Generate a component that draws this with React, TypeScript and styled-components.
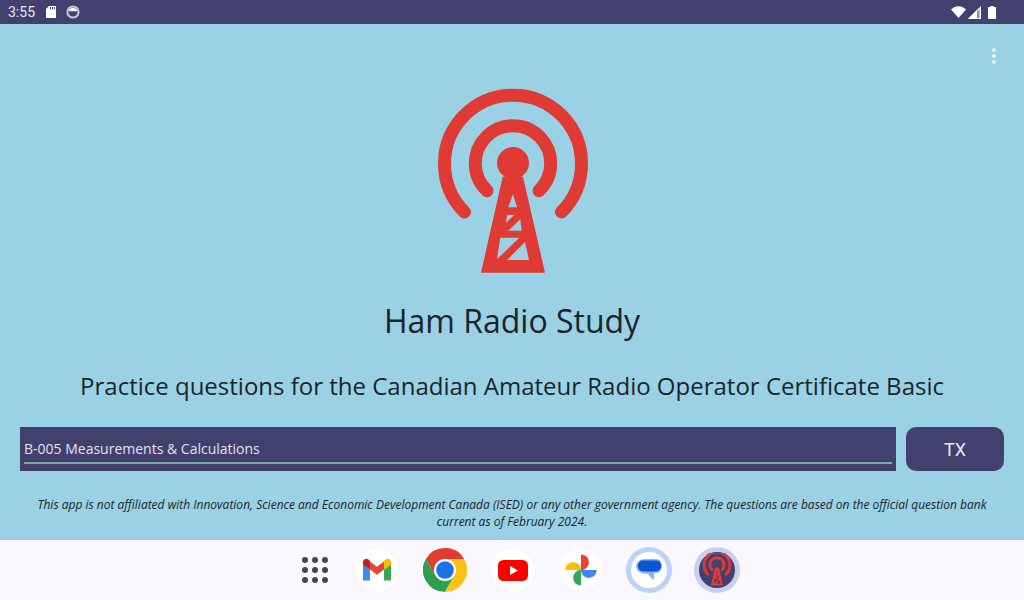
import React from 'react'
import styled, { createGlobalStyle } from 'styled-components'

const indigo = '#41406f'
const sky = '#9ad1e5'
const red = '#e03a35'

const GlobalStyle = createGlobalStyle`
  html, body {
    margin: 0;
    padding: 0;
    width: 1024px;
    height: 600px;
    overflow: hidden;
    background: ${sky};
    font-family: 'Open Sans', 'Liberation Sans', sans-serif;
  }
  * { box-sizing: border-box; }
`

const towerPath =
  'M81.7 96.7L60 192.7H124L102 96.7Z M92 114L87.3 127.3H96Z M86 135H93.3L85 142.7Z M99.3 139.3L100.7 150.7H87.3Z M79.3 157.7H98.3L76 179.3Z M104 162L108 180H86Z'

const StatusIcons = {
  Sd: () => (
    <svg width="12" height="14" viewBox="0 0 12 14">
      <path d="M4 1H11V13H1V4Z" fill="#fff" />
      <path d="M5.5 2v2.4M7.5 2v2.4M9.5 2v2.4" stroke="#41406f" strokeWidth="1" />
    </svg>
  ),
  Sync: () => (
    <svg width="14" height="14" viewBox="0 0 14 14">
      <circle cx="7" cy="7" r="5.6" fill="none" stroke="#c9c8d6" strokeWidth="2" />
      <path d="M2.6 6.2A4.5 4.5 0 0 1 11.4 6.2Z" fill="#fff" />
    </svg>
  ),
  Wifi: () => (
    <svg width="15" height="12" viewBox="0 0 15 12">
      <path d="M0 3.6C4.2 -0.9 10.8 -0.9 15 3.6L7.5 12Z" fill="#fff" />
    </svg>
  ),
  Signal: () => (
    <svg width="13" height="13" viewBox="0 0 13 13">
      <path d="M13 0V13H0Z" fill="#8f8eac" />
      <path d="M9 4V13H0Z" fill="#fff" />
      <path d="M13 0V13H11.6V3.4Z" fill="#fff" />
      <path d="M0 13L13 0V1.6L2.4 12H13V13Z" fill="#fff" />
    </svg>
  ),
  Battery: () => (
    <svg width="8" height="13" viewBox="0 0 8 13">
      <path d="M2.5 0H5.5V1H7C7.6 1 8 1.4 8 2V12C8 12.6 7.6 13 7 13H1C.4 13 0 12.6 0 12V2C0 1.4 .4 1 1 1H2.5Z" fill="#fff" />
    </svg>
  ),
}

const Gmail = () => (
  <svg width="30" height="24" viewBox="0 0 30 24">
    <path d="M1 22.5V6.5L8 11.5V22.5Z" fill="#4285f4" />
    <path d="M22 22.5V11.5L29 6.5V22.5Z" fill="#34a853" />
    <path d="M8 11.5L15 16.7L22 11.5V3.5L15 8.8L8 3.5Z" fill="#ea4335" />
    <path d="M1 7V4C1 1.2 4.2 -0.2 6.4 1.5L8 2.7V11.5Z" fill="#c5221f" />
    <path d="M29 7V4C29 1.2 25.8 -0.2 23.6 1.5L22 2.7V11.5Z" fill="#fbbc04" />
  </svg>
)

const Chrome = () => (
  <svg width="44" height="44" viewBox="0 0 44 44">
    <path d="M22 0A22 22 0 0 1 41.1 11H22Z" fill="#e33b2e" />
    <path d="M22 0A22 22 0 0 0 2.9 11L12.5 27.5L22 11H41.1A22 22 0 0 0 22 0Z" fill="#e33b2e" />
    <path d="M2.9 11A22 22 0 0 0 22 44L31.5 27.5H12.5Z" fill="#2f9e4f" />
    <path d="M41.1 11H22L31.5 27.5L22 44A22 22 0 0 0 41.1 11Z" fill="#fbc116" />
    <circle cx="22" cy="22" r="11" fill="#fff" />
    <circle cx="22" cy="22" r="8.8" fill="#1a73e8" />
  </svg>
)

const Youtube = () => (
  <svg width="30" height="21" viewBox="0 0 30 21">
    <rect width="30" height="21" rx="5.5" fill="#f00" />
    <path d="M12 6V15L20 10.5Z" fill="#fff" />
  </svg>
)

const Photos = () => (
  <svg width="32" height="32" viewBox="0 0 32 32">
    <path d="M16 16V0.5C21.6 .5 23.8 4.6 23.8 8.2C23.8 12.5 20.3 16 16 16Z" fill="#ea4335" />
    <path d="M16 16H31.5C31.5 21.6 27.4 23.8 23.8 23.8C19.5 23.8 16 20.3 16 16Z" fill="#4285f4" />
    <path d="M16 16V31.5C10.4 31.5 8.2 27.4 8.2 23.8C8.2 19.5 11.7 16 16 16Z" fill="#34a853" />
    <path d="M16 16H.5C.5 10.4 4.6 8.2 8.2 8.2C12.5 8.2 16 11.7 16 16Z" fill="#fbbc04" />
  </svg>
)

const Messages = () => (
  <svg width="26" height="26" viewBox="0 0 26 26">
    <path d="M9 2H20C23.5 2 26 4.5 26 8.5C26 13 23.5 16 20 16H18V23C15.5 21.5 13.5 19 12 17C5 17 0 14 0 9.5C0 5 4 2 9 2Z" fill="#8ab4f8" />
    <path d="M7 3.5H20C23 3.5 25 5.5 25 8.7C25 12 23 14.5 20 14.5H7C4 14.5 2 12 2 8.7C2 5.5 4 3.5 7 3.5Z" fill="#0b57d0" />
  </svg>
)

const AppGlyph = () => (
  <svg width="30" height="34" viewBox="30 20 124 180" fill="none">
    <circle cx="92" cy="83" r="37.7" stroke={red} strokeWidth="15" strokeLinecap="round" strokeDasharray="178 60" strokeDashoffset="-89" pathLength="238" transform="rotate(-135 92 83) rotate(135 92 83)" />
    <path d="M43.5 132A68.5 68.5 0 1 1 140.5 132" stroke={red} strokeWidth="15" strokeLinecap="round" />
    <path d={towerPath} fill={red} fillRule="evenodd" />
  </svg>
)

export default function App() {
  return (
    <>
      <GlobalStyle />
      <Screen>
        <StatusBar>
          <StatusLeft>
            <Time>3:55</Time>
            <StatusIcons.Sd />
            <StatusIcons.Sync />
          </StatusLeft>
          <StatusRight>
            <StatusIcons.Wifi />
            <StatusIcons.Signal />
            <StatusIcons.Battery />
          </StatusRight>
        </StatusBar>
        <Main>
          <OverflowButton aria-label="More options">
            <i />
            <i />
            <i />
          </OverflowButton>
          <Logo width="151" height="185" viewBox="16 8 151 185">
            <path d="M66 110.7A37.7 37.7 0 1 1 118 110.7" fill="none" stroke={red} strokeWidth="13" strokeLinecap="round" />
            <path d="M43.5 132A68.5 68.5 0 1 1 140.5 132" fill="none" stroke={red} strokeWidth="13" strokeLinecap="round" />
            <circle cx="92" cy="83" r="16" fill={red} />
            <path d={towerPath} fill={red} fillRule="evenodd" />
          </Logo>
          <Title>Ham Radio Study</Title>
          <Subtitle>Practice questions for the Canadian Amateur Radio Operator Certificate Basic</Subtitle>
          <FormRow>
            <TopicField>
              <TopicValue>B-005 Measurements &amp; Calculations</TopicValue>
            </TopicField>
            <TxButton>TX</TxButton>
          </FormRow>
          <Disclaimer>
            This app is not affiliated with Innovation, Science and Economic Development Canada (ISED) or any other
            government agency. The questions are based on the official question bank current as of February 2024.
          </Disclaimer>
        </Main>
        <Dock>
          <AppGrid>
            {Array.from({ length: 9 }).map((_, i) => (
              <i key={i} />
            ))}
          </AppGrid>
          <DockIcon><Gmail /></DockIcon>
          <DockIcon $flat><Chrome /></DockIcon>
          <DockIcon><Youtube /></DockIcon>
          <DockIcon><Photos /></DockIcon>
          <RingIcon $ring="#bcd3f7" $fill="#fff"><Messages /></RingIcon>
          <RingIcon $ring="#c9cff2" $fill={indigo}><AppGlyph /></RingIcon>
        </Dock>
      </Screen>
    </>
  )
}

const Screen = styled.div`
  width: 1024px;
  height: 600px;
  display: flex;
  flex-direction: column;
`
const StatusBar = styled.header`
  height: 24px;
  flex: none;
  background: ${indigo};
  display: flex;
  align-items: center;
  justify-content: space-between;
  padding: 0 28px 0 8px;
`
const StatusLeft = styled.div`
  display: flex;
  align-items: center;
  gap: 9px;
`
const StatusRight = styled.div`
  display: flex;
  align-items: center;
  gap: 2px;
  svg:last-child {
    margin-left: 5px;
  }
`
const Time = styled.span`
  font-family: Roboto, 'Liberation Sans', sans-serif;
  font-size: 14px;
  color: #e9e8f0;
  margin-right: 1px;
`
const Main = styled.main`
  position: relative;
  flex: 1;
  background: ${sky};
  display: flex;
  flex-direction: column;
  align-items: center;
  padding: 64px 20px 0;
  color: #1b2529;
`
const OverflowButton = styled.button`
  position: absolute;
  top: 24px;
  right: 28px;
  width: 4px;
  padding: 0;
  border: 0;
  background: none;
  display: flex;
  flex-direction: column;
  gap: 2px;
  i {
    width: 4px;
    height: 4px;
    border-radius: 50%;
    background: #e6f1f6;
  }
`
const Logo = styled.svg`
  flex: none;
  display: block;
`
const Title = styled.h1`
  margin: 26px 0 0;
  font-size: 32px;
  line-height: 44px;
  font-weight: 400;
`
const Subtitle = styled.h2`
  margin: 26px 0 0;
  font-size: 24px;
  line-height: 33px;
  font-weight: 400;
  white-space: nowrap;
`
const FormRow = styled.div`
  align-self: stretch;
  margin-top: 25px;
  display: flex;
  gap: 10px;
  height: 44px;
`
const TopicField = styled.div`
  flex: 1;
  background: ${indigo};
  padding: 0 4px;
  display: flex;
`
const TopicValue = styled.div`
  flex: 1;
  height: 37px;
  border-bottom: 2px solid #78aaa6;
  color: #e6e1ec;
  font-size: 14px;
  line-height: 20px;
  padding-top: 12px;
`
const TxButton = styled.button`
  width: 98px;
  border: 0;
  border-radius: 10px;
  background: ${indigo};
  color: #e9e8f0;
  font-family: Roboto, 'Liberation Sans', sans-serif;
  font-size: 18px;
  padding: 0;
`
const Disclaimer = styled.p`
  margin: 25px 0 0;
  width: 984px;
  font-size: 12px;
  line-height: 17px;
  font-style: italic;
  text-align: center;
  color: #1b2529;
`
const Dock = styled.nav`
  height: 60px;
  flex: none;
  background: #fbf7fe;
  display: flex;
  align-items: center;
  justify-content: center;
  padding-left: 16px;
  gap: 24px;
`
const AppGrid = styled.div`
  width: 26px;
  margin-right: 3px;
  display: grid;
  grid-template-columns: repeat(3, 6px);
  grid-auto-rows: 6px;
  gap: 4px;
  i {
    border-radius: 50%;
    background: #45454f;
  }
`
const DockIcon = styled.div<{ $flat?: boolean }>`
  width: 44px;
  height: 44px;
  border-radius: 50%;
  background: #fff;
  display: flex;
  align-items: center;
  justify-content: center;
  box-shadow: ${({ $flat }) => ($flat ? 'none' : '0 0 2px rgba(0, 0, 0, 0.06)')};
`
const RingIcon = styled.div<{ $ring: string; $fill: string }>`
  width: 46px;
  height: 46px;
  margin: 0 -1px;
  border-radius: 50%;
  background: ${({ $fill }) => $fill};
  border: 5px solid ${({ $ring }) => $ring};
  display: flex;
  align-items: center;
  justify-content: center;
`
